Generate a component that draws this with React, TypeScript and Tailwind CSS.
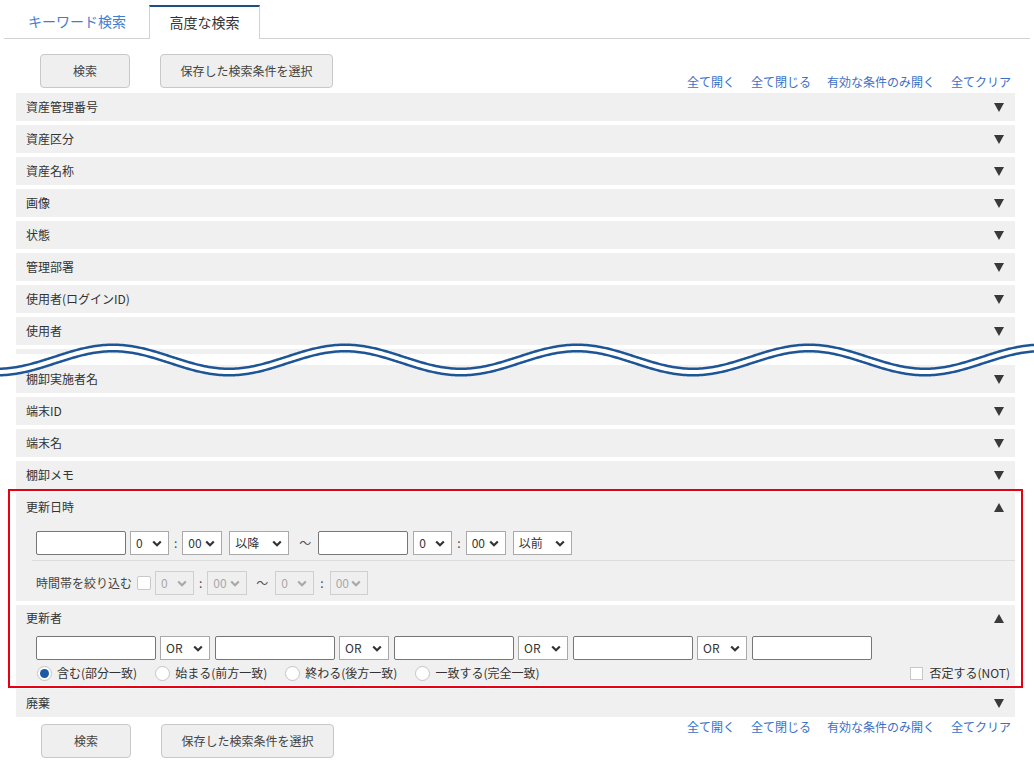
import React from 'react';

const topRows = ['資産管理番号', '資産区分', '資産名称', '画像', '状態', '管理部署', '使用者(ログインID)', '使用者'];
const midRows = ['棚卸実施者名', '端末ID', '端末名', '棚卸メモ'];
const links = ['全て開く', '全て閉じる', '有効な条件のみ開く', '全てクリア'];

function Down() {
  return (
    <svg width="10" height="9" viewBox="0 0 10 9" className="shrink-0">
      <polygon points="0,0 10,0 5,9" fill="#3a3a3a" />
    </svg>
  );
}
function Up() {
  return (
    <svg width="10" height="9" viewBox="0 0 10 9" className="shrink-0">
      <polygon points="0,9 10,9 5,0" fill="#3a3a3a" />
    </svg>
  );
}

function Chevron() {
  return (
    <svg width="10" height="7" viewBox="0 0 10 7" className="shrink-0">
      <path d="M1.2 1.5 L5 5.2 L8.8 1.5" fill="none" stroke="currentColor" strokeWidth="2.2" />
    </svg>
  );
}

function Row({ label }: { label: string }) {
  return (
    <div className="mb-[4px] flex h-[28px] items-center justify-between bg-[#f0f0f0] pl-[10px] pr-[11px] text-[12px] leading-[14px]">
      <span>{label}</span>
      <Down />
    </div>
  );
}

function Sel({ w, label, disabled }: { w: string; label: string; disabled?: boolean }) {
  return (
    <div
      className={
        'flex h-[24px] shrink-0 items-center justify-between border pl-[5px] pr-[6px] text-[12px] leading-[14px] ' +
        w +
        (disabled ? ' border-[#cfcfcf] bg-[#efefef] text-[#a8a8a8]' : ' border-[#a9a9a9] bg-white text-[#333]')
      }
    >
      <span>{label}</span>
      <span className={disabled ? 'text-[#a8a8a8]' : 'text-[#333]'}>
        <Chevron />
      </span>
    </div>
  );
}

function TextBox({ w }: { w: string }) {
  return <div className={'h-[24px] shrink-0 rounded-[2px] border border-[#767676] bg-white ' + w} />;
}

function Colon({ cls }: { cls: string }) {
  return <span className={'text-[12px] leading-[14px] text-[#444] ' + cls}>:</span>;
}

function Btn({ label, w }: { label: string; w: string }) {
  return (
    <div
      className={
        'flex h-[34px] items-center justify-center rounded-[4px] border border-[#c8c8c8] bg-[#efefef] text-[12px] leading-[14px] text-[#444] ' +
        w
      }
    >
      {label}
    </div>
  );
}

function Radio({ checked, label }: { checked?: boolean; label: string }) {
  return (
    <div className="flex items-center gap-[5px]">
      <div className="flex h-[15px] w-[15px] items-center justify-center rounded-full border border-[#c4c4c4] bg-white">
        {checked && <div className="h-[9px] w-[9px] rounded-full bg-[#1c5aa3]" />}
      </div>
      <span className="text-[12px] leading-[14px] text-[#333]">{label}</span>
    </div>
  );
}

function wavePath() {
  let d = '';
  for (let x = -10; x <= 1044; x += 2) {
    const y = 30 - 12 * Math.cos((2 * Math.PI * (x - 113)) / 232);
    d += (x === -10 ? 'M' : 'L') + x + ' ' + y.toFixed(2) + ' ';
  }
  return d;
}

export default function App() {
  const wd = wavePath();
  return (
    <div className="relative h-[762px] w-[1034px] overflow-hidden bg-white font-['Noto_Sans_CJK_JP',sans-serif] text-[#333]">
      {/* tabs */}
      <div className="mx-[4px] mt-[5px] flex h-[34px] border-b border-[#d2d2d2]">
        <div className="flex w-[145px] items-center pb-[2px] pl-[24px] text-[14px] leading-[16px] text-[#3f7dd0]">キーワード検索</div>
        <div className="-mb-px flex h-[34px] w-[111px] items-center justify-center border-x border-t-2 border-x-[#d2d2d2] border-t-[#1f4f7f] bg-white pb-[3px] text-[14px] leading-[16px] text-[#333]">
          高度な検索
        </div>
      </div>

      {/* top controls */}
      <div className="mt-[15px] flex h-[35px] items-end justify-between pl-[40px] pr-[23px]">
        <div className="flex gap-[30px] self-start">
          <Btn label="検索" w="w-[90px]" />
          <Btn label="保存した検索条件を選択" w="w-[173px]" />
        </div>
        <div className="flex gap-[16px] text-[12px] leading-[14px] text-[#3b6fc6]">
          {links.map((l) => (
            <span key={l}>{l}</span>
          ))}
        </div>
      </div>

      {/* rows */}
      <div className="ml-[16px] mt-[4px] w-[999px]">
        {topRows.map((r) => (
          <Row key={r} label={r} />
        ))}
        <div className="mb-[11px] h-[5px] bg-[#f0f0f0]" />
        {midRows.map((r) => (
          <Row key={r} label={r} />
        ))}

        {/* 更新日時 */}
        <div className="mb-[4px] h-[108px] bg-[#f0f0f0]">
          <div className="flex h-[28px] items-center justify-between pl-[10px] pr-[11px] text-[12px] leading-[14px]">
            <span>更新日時</span>
            <Up />
          </div>
          <div className="flex items-center pl-[20px] pt-[10px]">
            <TextBox w="w-[90px]" />
            <div className="ml-[4px]">
              <Sel w="w-[39px]" label="0" />
            </div>
            <Colon cls="mx-[5px]" />
            <Sel w="w-[40px]" label="00" />
            <div className="ml-[7px]">
              <Sel w="w-[60px]" label="以降" />
            </div>
            <span className="ml-[10px] mr-[7px] w-[12px] text-[12px] leading-[14px] text-[#555]">～</span>
            <TextBox w="w-[90px]" />
            <div className="ml-[5px]">
              <Sel w="w-[39px]" label="0" />
            </div>
            <Colon cls="mx-[5px]" />
            <Sel w="w-[40px]" label="00" />
            <div className="ml-[7px]">
              <Sel w="w-[59px]" label="以前" />
            </div>
          </div>
          <div className="ml-[16px] mt-[5px] h-px bg-[#dcdcdc]" />
          <div className="mt-[10px] flex items-center pl-[20px]">
            <span className="text-[12px] leading-[14px] text-[#444]">時間帯を絞り込む</span>
            <div className="ml-[5px] h-[14px] w-[14px] rounded-[2px] border border-[#c8c8c8] bg-white" />
            <div className="ml-[4px]">
              <Sel w="w-[39px]" label="0" disabled />
            </div>
            <Colon cls="mx-[5px]" />
            <Sel w="w-[40px]" label="00" disabled />
            <span className="ml-[9px] mr-[7px] w-[12px] text-[12px] leading-[14px] text-[#555]">～</span>
            <Sel w="w-[39px]" label="0" disabled />
            <Colon cls="mx-[6px]" />
            <Sel w="w-[38px]" label="00" disabled />
          </div>
        </div>

        {/* 更新者 */}
        <div className="mb-[4px] h-[80px] bg-[#f0f0f0]">
          <div className="flex h-[26px] items-center justify-between pl-[10px] pr-[11px] text-[12px] leading-[14px]">
            <span>更新者</span>
            <Up />
          </div>
          <div className="mt-[5px] flex items-center pl-[20px]">
            <TextBox w="w-[120px]" />
            <div className="ml-[4px] mr-[5px]">
              <Sel w="w-[50px]" label="OR" />
            </div>
            <TextBox w="w-[120px]" />
            <div className="ml-[4px] mr-[5px]">
              <Sel w="w-[50px]" label="OR" />
            </div>
            <TextBox w="w-[120px]" />
            <div className="ml-[4px] mr-[5px]">
              <Sel w="w-[50px]" label="OR" />
            </div>
            <TextBox w="w-[120px]" />
            <div className="ml-[4px] mr-[5px]">
              <Sel w="w-[50px]" label="OR" />
            </div>
            <TextBox w="w-[120px]" />
          </div>
          <div className="mt-[5px] flex h-[16px] items-center pl-[21px] pr-[5px]">
            <div className="flex items-center gap-[18px]">
              <Radio checked label="含む(部分一致)" />
              <Radio label="始まる(前方一致)" />
              <Radio label="終わる(後方一致)" />
              <Radio label="一致する(完全一致)" />
            </div>
            <div className="ml-auto flex items-center gap-[6px]">
              <div className="h-[13px] w-[13px] border border-[#c8c8c8] bg-white" />
              <span className="text-[12px] leading-[14px] text-[#333]">否定する(NOT)</span>
            </div>
          </div>
        </div>

        <div className="flex h-[28px] items-center justify-between bg-[#f0f0f0] pl-[10px] pr-[11px] text-[12px] leading-[14px]">
          <span>廃棄</span>
          <Down />
        </div>
      </div>

      {/* bottom controls */}
      <div className="mt-[3px] flex justify-between pl-[41px] pr-[23px]">
        <div className="mt-[4px] flex gap-[30px]">
          <Btn label="検索" w="w-[90px]" />
          <Btn label="保存した検索条件を選択" w="w-[173px]" />
        </div>
        <div className="flex gap-[16px] text-[12px] leading-[14px] text-[#3b6fc6]">
          {links.map((l) => (
            <span key={l}>{l}</span>
          ))}
        </div>
      </div>

      {/* annotation box */}
      <div className="pointer-events-none absolute left-[8px] top-[489px] h-[199px] w-[1015px] border-2 border-[#e60012]" />

      {/* wave break */}
      <svg className="pointer-events-none absolute left-0 top-[330px]" width="1034" height="60" viewBox="0 0 1034 60">
        <path d={wd} fill="none" stroke="#1d5596" strokeWidth="9" />
        <path d={wd} fill="none" stroke="#ffffff" strokeWidth="4" />
      </svg>
    </div>
  );
}
